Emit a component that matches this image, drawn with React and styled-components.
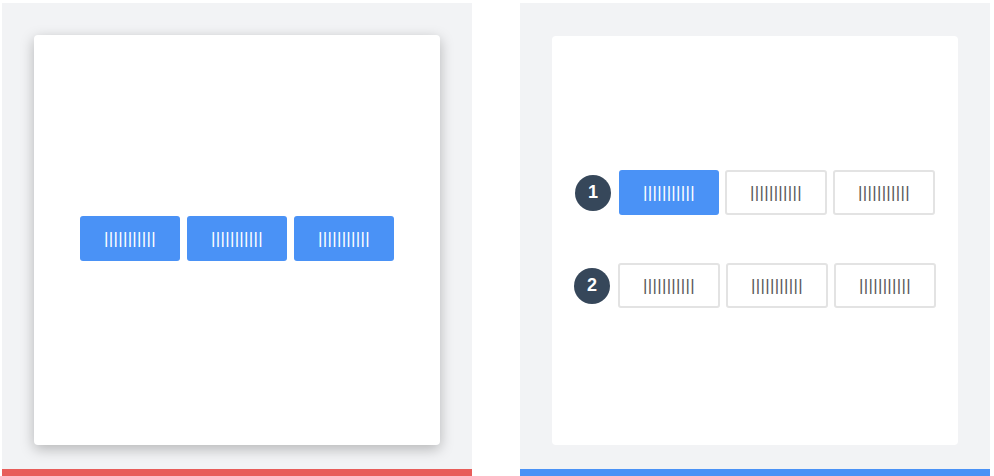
import React from 'react';
import styled, { createGlobalStyle } from 'styled-components';

const blue = '#4a92f6';
const red = '#e85d5a';
const panelGray = '#f2f3f5';
const slate = '#36475a';

const GlobalStyle = createGlobalStyle`
  html, body {
    margin: 0;
    padding: 0;
    background: #ffffff;
    font-family: "Liberation Sans", Arial, sans-serif;
  }
`;

const Page = styled.div`
  display: flex;
  gap: 48px;
  padding: 3px 0 0 2px;
  width: 994px;
  height: 476px;
  box-sizing: border-box;
  overflow: hidden;
`;

const Panel = styled.section`
  width: 470px;
  display: flex;
  flex-direction: column;
`;

const Stage = styled.div`
  background: ${panelGray};
  padding: ${p => p.$top}px 32px 24px;
  height: 466px;
  box-sizing: border-box;
`;

const Bar = styled.div`
  height: 8px;
  background: ${p => p.$color};
`;

const Card = styled.div`
  background: #ffffff;
  height: ${p => p.$h}px;
  border-radius: 4px;
  box-shadow: ${p => (p.$raised ? '0 4px 14px rgba(0, 0, 0, 0.26)' : 'none')};
  display: flex;
  flex-direction: column;
  align-items: center;
  justify-content: center;
  gap: 48px;
  padding-bottom: ${p => p.$lift || 0}px;
  box-sizing: border-box;
`;

const Group = styled.div`
  display: flex;
  gap: ${p => p.$gap || 7}px;
`;

const Row = styled.div`
  display: flex;
  align-items: center;
  gap: 8px;
`;

const Step = styled.div`
  width: 36px;
  height: 36px;
  border-radius: 50%;
  background: ${slate};
  color: #ffffff;
  font-weight: 700;
  font-size: 18px;
  display: flex;
  align-items: center;
  justify-content: center;
`;

const Button = styled.button`
  width: ${p => (p.$outline ? 102 : 100)}px;
  height: 45px;
  box-sizing: border-box;
  border-radius: 3px;
  border: ${p => (p.$outline ? '2px solid #e3e3e3' : 'none')};
  background: ${p => (p.$outline ? '#ffffff' : blue)};
  color: ${p => (p.$outline ? '#5a5a5a' : '#ffffff')};
  font-family: "Liberation Sans", Arial, sans-serif;
  font-size: 17px;
  letter-spacing: 0.3px;
  line-height: 1;
  padding: 0;
  display: flex;
  align-items: center;
  justify-content: center;
`;

const label = '|||||||||||';

export default function App() {
  return (
    <>
      <GlobalStyle />
      <Page>
        <Panel>
          <Stage $top={32}>
            <Card $raised $h={410} $lift={4}>
              <Group>
                <Button>{label}</Button>
                <Button>{label}</Button>
                <Button>{label}</Button>
              </Group>
            </Card>
          </Stage>
          <Bar $color={red} />
        </Panel>
        <Panel>
          <Stage $top={33}>
            <Card $h={409} $lift={3}>
              <Row>
                <Step>1</Step>
                <Group $gap={6}>
                  <Button>{label}</Button>
                  <Button $outline>{label}</Button>
                  <Button $outline>{label}</Button>
                </Group>
              </Row>
              <Row>
                <Step>2</Step>
                <Group $gap={6}>
                  <Button $outline>{label}</Button>
                  <Button $outline>{label}</Button>
                  <Button $outline>{label}</Button>
                </Group>
              </Row>
            </Card>
          </Stage>
          <Bar $color={blue} />
        </Panel>
      </Page>
    </>
  );
}
